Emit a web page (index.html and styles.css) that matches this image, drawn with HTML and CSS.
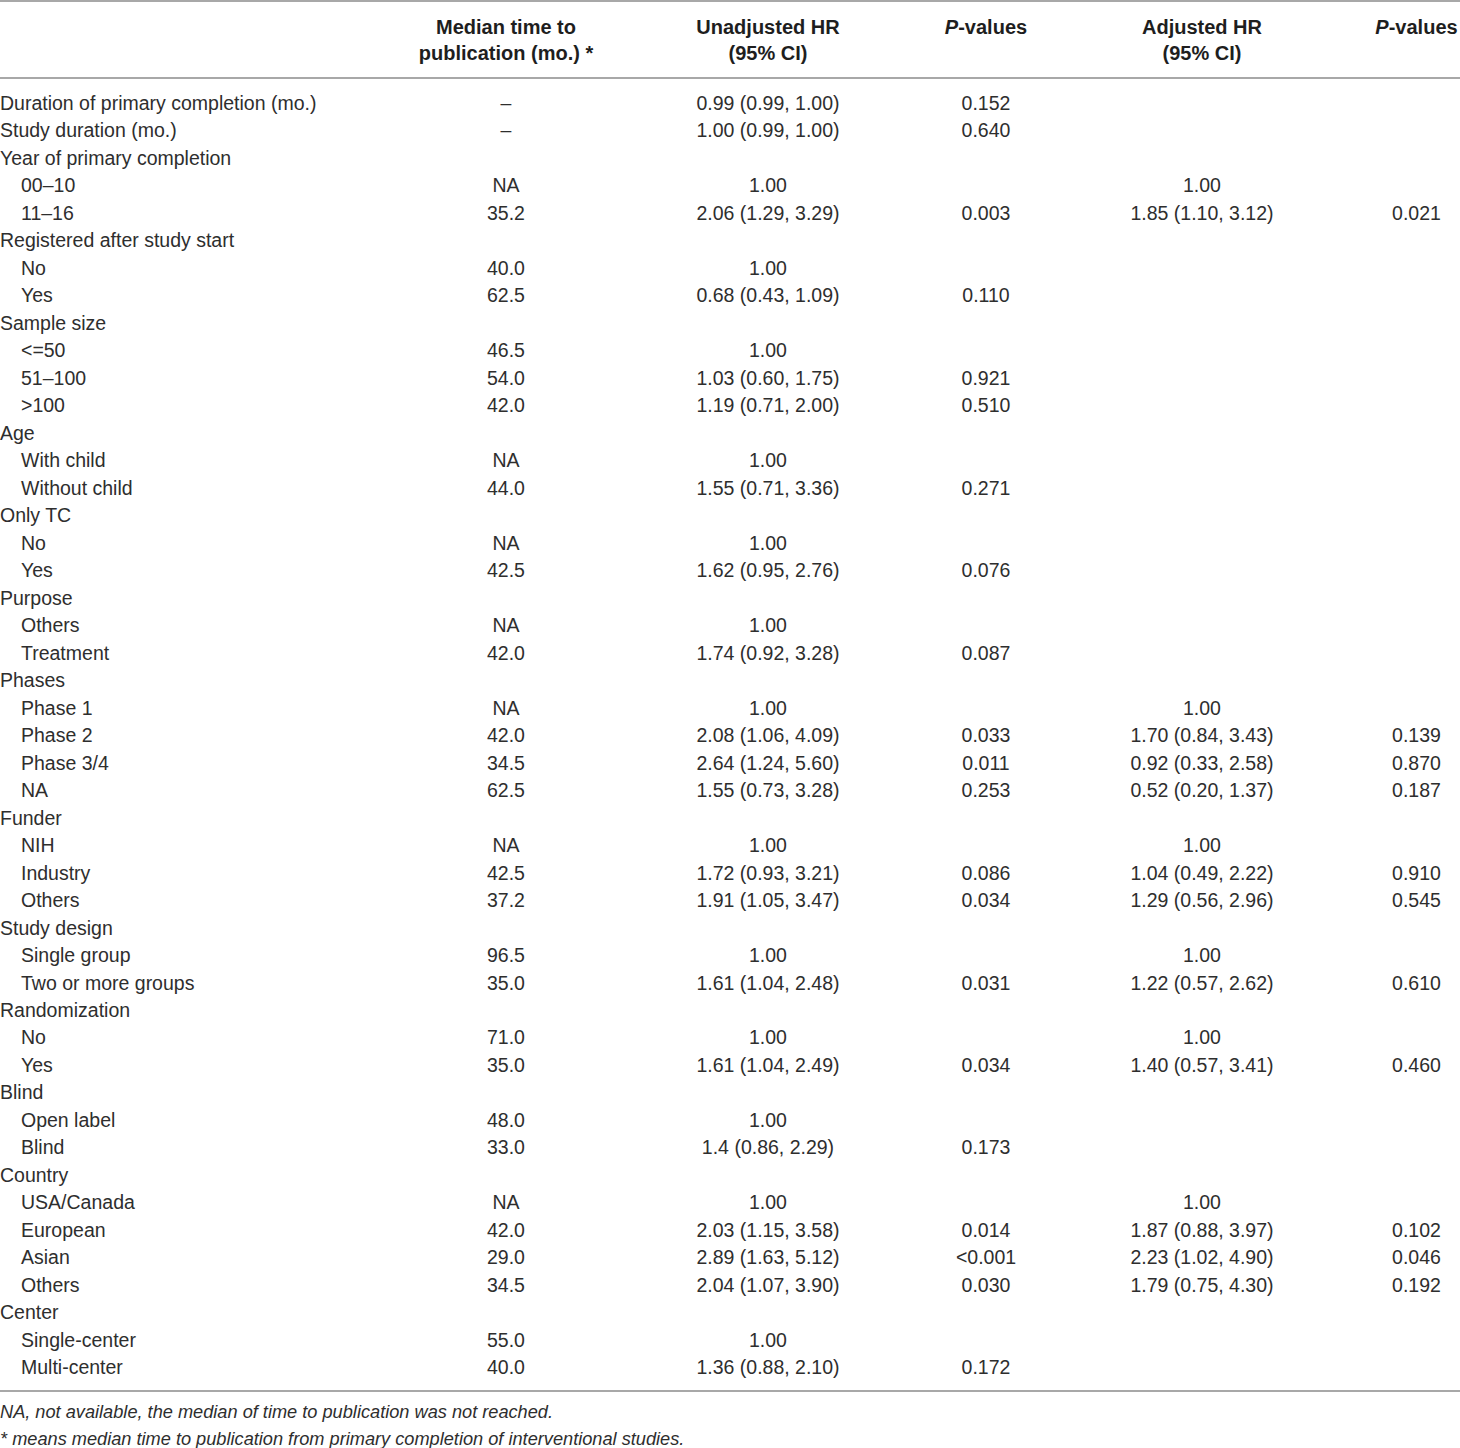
FILE: index.html
```html
<!DOCTYPE html>
<html>
<head>
<meta charset="utf-8">
<link rel="stylesheet" href="styles.css">
</head>
<body>
<table class="tbl">
<colgroup>
<col class="c1"><col class="c2"><col class="c3"><col class="c4"><col class="c5"><col class="c6">
</colgroup>
<thead>
<tr>
<th></th>
<th>Median time to<br>publication (mo.) *</th>
<th>Unadjusted HR<br>(95% CI)</th>
<th><i>P</i>-values</th>
<th>Adjusted HR<br>(95% CI)</th>
<th><i>P</i>-values</th>
</tr>
</thead>
<tbody>
<tr><td>Duration of primary completion (mo.)</td><td>–</td><td>0.99 (0.99, 1.00)</td><td>0.152</td><td></td><td></td></tr>
<tr><td>Study duration (mo.)</td><td>–</td><td>1.00 (0.99, 1.00)</td><td>0.640</td><td></td><td></td></tr>
<tr><td>Year of primary completion</td><td></td><td></td><td></td><td></td><td></td></tr>
<tr><td class="sub">00–10</td><td>NA</td><td>1.00</td><td></td><td>1.00</td><td></td></tr>
<tr><td class="sub">11–16</td><td>35.2</td><td>2.06 (1.29, 3.29)</td><td>0.003</td><td>1.85 (1.10, 3.12)</td><td>0.021</td></tr>
<tr><td>Registered after study start</td><td></td><td></td><td></td><td></td><td></td></tr>
<tr><td class="sub">No</td><td>40.0</td><td>1.00</td><td></td><td></td><td></td></tr>
<tr><td class="sub">Yes</td><td>62.5</td><td>0.68 (0.43, 1.09)</td><td>0.110</td><td></td><td></td></tr>
<tr><td>Sample size</td><td></td><td></td><td></td><td></td><td></td></tr>
<tr><td class="sub">&lt;=50</td><td>46.5</td><td>1.00</td><td></td><td></td><td></td></tr>
<tr><td class="sub">51–100</td><td>54.0</td><td>1.03 (0.60, 1.75)</td><td>0.921</td><td></td><td></td></tr>
<tr><td class="sub">&gt;100</td><td>42.0</td><td>1.19 (0.71, 2.00)</td><td>0.510</td><td></td><td></td></tr>
<tr><td>Age</td><td></td><td></td><td></td><td></td><td></td></tr>
<tr><td class="sub">With child</td><td>NA</td><td>1.00</td><td></td><td></td><td></td></tr>
<tr><td class="sub">Without child</td><td>44.0</td><td>1.55 (0.71, 3.36)</td><td>0.271</td><td></td><td></td></tr>
<tr><td>Only TC</td><td></td><td></td><td></td><td></td><td></td></tr>
<tr><td class="sub">No</td><td>NA</td><td>1.00</td><td></td><td></td><td></td></tr>
<tr><td class="sub">Yes</td><td>42.5</td><td>1.62 (0.95, 2.76)</td><td>0.076</td><td></td><td></td></tr>
<tr><td>Purpose</td><td></td><td></td><td></td><td></td><td></td></tr>
<tr><td class="sub">Others</td><td>NA</td><td>1.00</td><td></td><td></td><td></td></tr>
<tr><td class="sub">Treatment</td><td>42.0</td><td>1.74 (0.92, 3.28)</td><td>0.087</td><td></td><td></td></tr>
<tr><td>Phases</td><td></td><td></td><td></td><td></td><td></td></tr>
<tr><td class="sub">Phase 1</td><td>NA</td><td>1.00</td><td></td><td>1.00</td><td></td></tr>
<tr><td class="sub">Phase 2</td><td>42.0</td><td>2.08 (1.06, 4.09)</td><td>0.033</td><td>1.70 (0.84, 3.43)</td><td>0.139</td></tr>
<tr><td class="sub">Phase 3/4</td><td>34.5</td><td>2.64 (1.24, 5.60)</td><td>0.011</td><td>0.92 (0.33, 2.58)</td><td>0.870</td></tr>
<tr><td class="sub">NA</td><td>62.5</td><td>1.55 (0.73, 3.28)</td><td>0.253</td><td>0.52 (0.20, 1.37)</td><td>0.187</td></tr>
<tr><td>Funder</td><td></td><td></td><td></td><td></td><td></td></tr>
<tr><td class="sub">NIH</td><td>NA</td><td>1.00</td><td></td><td>1.00</td><td></td></tr>
<tr><td class="sub">Industry</td><td>42.5</td><td>1.72 (0.93, 3.21)</td><td>0.086</td><td>1.04 (0.49, 2.22)</td><td>0.910</td></tr>
<tr><td class="sub">Others</td><td>37.2</td><td>1.91 (1.05, 3.47)</td><td>0.034</td><td>1.29 (0.56, 2.96)</td><td>0.545</td></tr>
<tr><td>Study design</td><td></td><td></td><td></td><td></td><td></td></tr>
<tr><td class="sub">Single group</td><td>96.5</td><td>1.00</td><td></td><td>1.00</td><td></td></tr>
<tr><td class="sub">Two or more groups</td><td>35.0</td><td>1.61 (1.04, 2.48)</td><td>0.031</td><td>1.22 (0.57, 2.62)</td><td>0.610</td></tr>
<tr><td>Randomization</td><td></td><td></td><td></td><td></td><td></td></tr>
<tr><td class="sub">No</td><td>71.0</td><td>1.00</td><td></td><td>1.00</td><td></td></tr>
<tr><td class="sub">Yes</td><td>35.0</td><td>1.61 (1.04, 2.49)</td><td>0.034</td><td>1.40 (0.57, 3.41)</td><td>0.460</td></tr>
<tr><td>Blind</td><td></td><td></td><td></td><td></td><td></td></tr>
<tr><td class="sub">Open label</td><td>48.0</td><td>1.00</td><td></td><td></td><td></td></tr>
<tr><td class="sub">Blind</td><td>33.0</td><td>1.4 (0.86, 2.29)</td><td>0.173</td><td></td><td></td></tr>
<tr><td>Country</td><td></td><td></td><td></td><td></td><td></td></tr>
<tr><td class="sub">USA/Canada</td><td>NA</td><td>1.00</td><td></td><td>1.00</td><td></td></tr>
<tr><td class="sub">European</td><td>42.0</td><td>2.03 (1.15, 3.58)</td><td>0.014</td><td>1.87 (0.88, 3.97)</td><td>0.102</td></tr>
<tr><td class="sub">Asian</td><td>29.0</td><td>2.89 (1.63, 5.12)</td><td>&lt;0.001</td><td>2.23 (1.02, 4.90)</td><td>0.046</td></tr>
<tr><td class="sub">Others</td><td>34.5</td><td>2.04 (1.07, 3.90)</td><td>0.030</td><td>1.79 (0.75, 4.30)</td><td>0.192</td></tr>
<tr><td>Center</td><td></td><td></td><td></td><td></td><td></td></tr>
<tr><td class="sub">Single-center</td><td>55.0</td><td>1.00</td><td></td><td></td><td></td></tr>
<tr><td class="sub">Multi-center</td><td>40.0</td><td>1.36 (0.88, 2.10)</td><td>0.172</td><td></td><td></td></tr>
</tbody>
</table>
<div class="notes">
<p>NA, not available, the median of time to publication was not reached.</p>
<p>* means median time to publication from primary completion of interventional studies.</p>
</div>
</body>
</html>
```

FILE: styles.css
```css
html, body {
  margin: 0;
  padding: 0;
  background: #fff;
}
body {
  font-family: "Liberation Sans", Arial, sans-serif;
  font-size: 19.5px;
  color: #2e2e2e;
}
.tbl {
  width: 1460px;
  border-collapse: collapse;
  table-layout: fixed;
  border-top: 2px solid #a8a8a8;
  border-bottom: 2px solid #a8a8a8;
}
.c1 { width: 417px; }
.c2 { width: 178px; }
.c3 { width: 346px; }
.c4 { width: 90px; }
.c5 { width: 342px; }
.c6 { width: 87px; }
.tbl th {
  font-weight: bold;
  font-size: 20px;
  color: #1e1e1e;
  line-height: 26px;
  padding: 12px 0 11px;
  text-align: center;
  vertical-align: top;
  white-space: nowrap;
  border-bottom: 2px solid #a8a8a8;
}
.tbl td {
  padding: 0;
  line-height: 27.48px;
  height: 27.48px;
  text-align: center;
  white-space: nowrap;
}
.tbl td:first-child {
  text-align: left;
}
.tbl td.sub {
  padding-left: 21px;
}
.tbl tbody tr:first-child td {
  padding-top: 11px;
}
.tbl tbody tr:last-child td {
  padding-bottom: 8px;
}
.notes {
  font-style: italic;
  font-size: 18.2px;
  color: #2e2e2e;
  padding-top: 7px;
}
.notes p {
  margin: 0;
  line-height: 27px;
}
```
